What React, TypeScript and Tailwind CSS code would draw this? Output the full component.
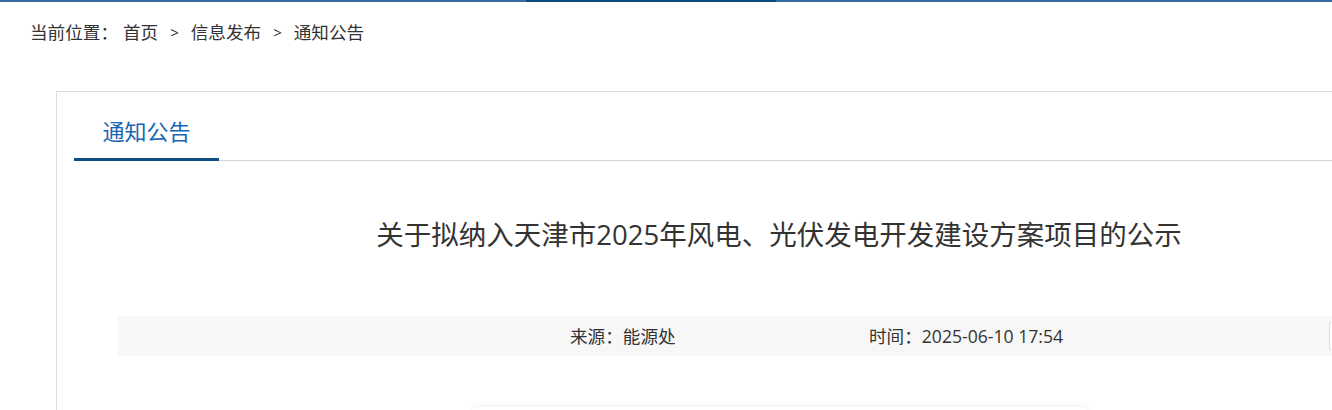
export default function App() {
  return (
    <div className="w-[1332px] h-[410px] overflow-hidden bg-white text-[#333] font-['Open_Sans','Noto_Sans_CJK_SC',sans-serif]">
      {/* nav bottom edge */}
      <div className="flex h-[2px]">
        <div className="w-[526px] bg-[#386c9c]" />
        <div className="w-[250px] bg-[#0d4a80]" />
        <div className="flex-1 bg-[#386c9c]" />
      </div>

      <div className="h-[60px] flex items-center pl-[30px] text-[17.6px]">
        <span>当前位置：</span>
        <span className="ml-[5px]">首页</span>
        <span className="mx-[12px] text-[15px]">&gt;</span>
        <span>信息发布</span>
        <span className="mx-[12px] text-[15px]">&gt;</span>
        <span>通知公告</span>
      </div>

      <div className="mt-[29px] ml-[56px] w-[1500px] h-[400px] border border-[#dddddd] pl-[17px]">
        <div className="flex border-b border-[#d4d4d4]">
          <div className="w-[145px] text-center pt-[24px] pb-[12px] leading-[30px] text-[22px] text-[#1766b3] border-b-[3px] border-[#0f4c81] -mb-px">
            通知公告
          </div>
        </div>

        <div className="ml-[44px] w-[1322px]">
          <h1 className="mt-[54px] leading-[40px] text-center text-[27.5px] text-[#333]">
            关于拟纳入天津市2025年风电、光伏发电开发建设方案项目的公示
          </h1>

          <div className="mt-[61px] h-[40px] bg-[#f7f7f7] flex items-center text-[17.6px]">
            <span className="ml-[452px] w-[299px]">来源：能源处</span>
            <span className="w-[460px]">时间：2025-06-10 17:54</span>
            <div className="w-[60px] h-[28px] border border-[#dcdcdc] rounded-[3px] bg-white" />
          </div>

          <div className="mt-[51px] mx-auto w-[615px] h-[200px] rounded-[4px] bg-white shadow-[0_0_6px_rgba(0,0,0,0.08)]" />
        </div>
      </div>
    </div>
  );
}
